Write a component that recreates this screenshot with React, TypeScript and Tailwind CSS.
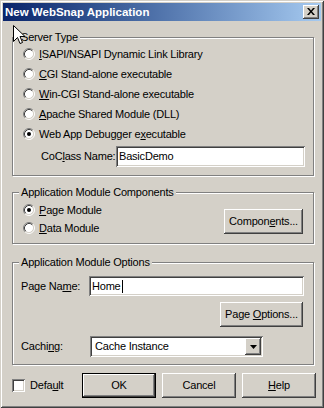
import React from "react";

type Kids = { children?: React.ReactNode; className?: string };

const sunken =
  "shadow-[inset_1px_1px_0_#808080,inset_-1px_-1px_0_#fff,inset_2px_2px_0_#404040,inset_-2px_-2px_0_#d4d0c8]";
const raised =
  "shadow-[inset_-1px_-1px_0_#404040,inset_1px_1px_0_#fff,inset_-2px_-2px_0_#808080,inset_2px_2px_0_#d4d0c8]";
const raisedDefault =
  "shadow-[inset_0_0_0_1px_#000,inset_-2px_-2px_0_#404040,inset_2px_2px_0_#fff,inset_-3px_-3px_0_#808080,inset_3px_3px_0_#d4d0c8]";

function U({ children }: Kids) {
  return <span className="underline underline-offset-[1px]">{children}</span>;
}

function Radio({ checked }: { checked?: boolean }) {
  return (
    <svg width="12" height="12" viewBox="0 0 12 12" className="shrink-0">
      <circle cx="6" cy="6" r="4.5" fill="#fff" />
      <path d="M2.11 9.89A5.5 5.5 0 0 1 9.89 2.11" fill="none" stroke="#808080" />
      <path d="M9.89 2.11A5.5 5.5 0 0 1 2.11 9.89" fill="none" stroke="#fff" />
      <path d="M2.82 9.18A4.5 4.5 0 0 1 9.18 2.82" fill="none" stroke="#404040" />
      <path d="M9.18 2.82A4.5 4.5 0 0 1 2.82 9.18" fill="none" stroke="#d4d0c8" />
      {checked && <circle cx="6" cy="6" r="2" fill="#000" />}
    </svg>
  );
}

function RadioRow({ checked, children, className }: Kids & { checked?: boolean }) {
  return (
    <div className={"flex items-center gap-[4px] " + (className ?? "h-[20px]")}>
      <Radio checked={checked} />
      <span className="whitespace-nowrap leading-[13px]">{children}</span>
    </div>
  );
}

function Group({ title, className, children }: Kids & { title: string }) {
  return (
    <div
      className={
        "relative border border-[#808080] shadow-[inset_1px_1px_0_#fff,1px_1px_0_#fff] " +
        (className ?? "")
      }
    >
      <span className="absolute -top-[7px] left-[6px] whitespace-nowrap bg-[#d4d0c8] px-[2px] leading-[13px]">
        {title}
      </span>
      {children}
    </div>
  );
}

function Button({ children, className, primary }: Kids & { primary?: boolean }) {
  return (
    <div
      className={
        "flex h-[25px] shrink-0 items-center justify-center bg-[#d4d0c8] leading-[13px] " +
        (primary ? raisedDefault : raised) +
        " " +
        (className ?? "")
      }
    >
      <span className="whitespace-nowrap">{children}</span>
    </div>
  );
}

function Edit({ children, className }: Kids) {
  return (
    <div className={"flex shrink-0 items-center bg-white leading-[13px] " + sunken + " " + (className ?? "")}>
      {children}
    </div>
  );
}

export default function App() {
  return (
    <div className="relative h-[408px] w-[324px] bg-[#d4d0c8] p-[3px] font-['Liberation_Sans',Arial,sans-serif] text-[11px] tracking-[-0.2px] text-black shadow-[inset_1px_1px_0_#d4d0c8,inset_-1px_-1px_0_#404040,inset_2px_2px_0_#fff,inset_-2px_-2px_0_#808080]">
      {/* title bar */}
      <div className="flex h-[18px] items-center justify-between bg-linear-to-r from-[#0a246a] to-[#a6caf0] pl-[2px] pr-[2px]">
        <span className="text-[11.5px] font-bold leading-[13px] tracking-normal text-white">
          New WebSnap Application
        </span>
        <div className={"flex h-[14px] w-[16px] items-center justify-center bg-[#d4d0c8] " + raised}>
          <svg width="8" height="7" viewBox="0 0 8 7" className="-ml-[1px] -mt-[1px]">
            <path d="M0 0h2l2 2.4L6 0h2L5 3.5 8 7H6L4 4.6 2 7H0l3-3.5z" fill="#000" />
          </svg>
        </div>
      </div>

      {/* Server Type */}
      <Group title="Server Type" className="ml-[9px] mt-[16px] w-[302px] pb-[8px] pt-[6px]">
        <div className="pl-[10px]">
          <RadioRow>
            <U>I</U>SAPI/NSAPI Dynamic Link Library
          </RadioRow>
          <RadioRow>
            <U>C</U>GI Stand-alone executable
          </RadioRow>
          <RadioRow>
            <U>W</U>in-CGI Stand-alone executable
          </RadioRow>
          <RadioRow>
            <U>A</U>pache Shared Module (DLL)
          </RadioRow>
          <RadioRow checked>
            Web App Debugger e<U>x</U>ecutable
          </RadioRow>
        </div>
        <div className="mt-[2px] flex items-center pl-[28px]">
          <span className="w-[75px] shrink-0 whitespace-nowrap leading-[13px]">
            CoC<U>l</U>ass Name:
          </span>
          <Edit className="h-[21px] w-[189px] pl-[3px]">BasicDemo</Edit>
        </div>
      </Group>

      {/* Application Module Components */}
      <Group
        title="Application Module Components"
        className="ml-[9px] mt-[16px] flex w-[302px] justify-between pb-[6px] pt-[8px]"
      >
        <div className="pl-[10px]">
          <RadioRow checked className="h-[18px]">
            <U>P</U>age Module
          </RadioRow>
          <RadioRow className="h-[18px]">
            <U>D</U>ata Module
          </RadioRow>
        </div>
        <Button className="mr-[10px] mt-[8px] w-[79px]">
          Compon<U>e</U>nts...
        </Button>
      </Group>

      {/* Application Module Options */}
      <Group
        title="Application Module Options"
        className="ml-[9px] mt-[18px] flex w-[302px] flex-col pb-[7px] pt-[13px]"
      >
        <div className="flex items-center pl-[8px]">
          <span className="w-[68px] shrink-0 whitespace-nowrap leading-[13px]">
            Page Na<U>m</U>e:
          </span>
          <Edit className="h-[20px] w-[215px] pl-[3px]">
            Home
            <span className="ml-[1px] inline-block h-[13px] w-[1px] bg-black" />
          </Edit>
        </div>
        <Button className="mr-[10px] mt-[6px] w-[83px] self-end">
          Page <U>O</U>ptions...
        </Button>
        <div className="mt-[9px] flex items-center pl-[8px]">
          <span className="w-[69px] shrink-0 whitespace-nowrap leading-[13px]">
            Cachi<U>n</U>g:
          </span>
          <div className={"flex h-[21px] w-[173px] shrink-0 items-center bg-white p-[2px] " + sunken}>
            <span className="flex-1 pl-[3px] leading-[13px]">Cache Instance</span>
            <div className={"flex h-[17px] w-[16px] items-center justify-center bg-[#d4d0c8] " + raised}>
              <svg width="7" height="4" viewBox="0 0 7 4">
                <path d="M0 0h7L3.5 4z" fill="#000" />
              </svg>
            </div>
          </div>
        </div>
      </Group>

      {/* bottom row */}
      <div className="ml-[9px] mt-[8px] flex items-center">
        <div className="flex w-[70px] shrink-0 items-center gap-[5px]">
          <div className={"h-[13px] w-[13px] bg-white " + sunken} />
          <span className="leading-[13px]">
            Defa<U>u</U>lt
          </span>
        </div>
        <div className="flex gap-[6px]">
          <Button primary className="w-[74px]">
            OK
          </Button>
          <Button className="w-[74px]">Cancel</Button>
          <Button className="w-[74px]">
            <U>H</U>elp
          </Button>
        </div>
      </div>

      {/* mouse pointer */}
      <svg
        width="13"
        height="20"
        viewBox="0 0 13 20"
        className="pointer-events-none absolute left-[13px] top-[25px]"
      >
        <path d="M0.5 0.5V16.5L4.5 12.5L7 18.5L9.5 17.5L7 11.5H12Z" fill="#fff" stroke="#000" strokeLinejoin="miter" />
      </svg>
    </div>
  );
}
